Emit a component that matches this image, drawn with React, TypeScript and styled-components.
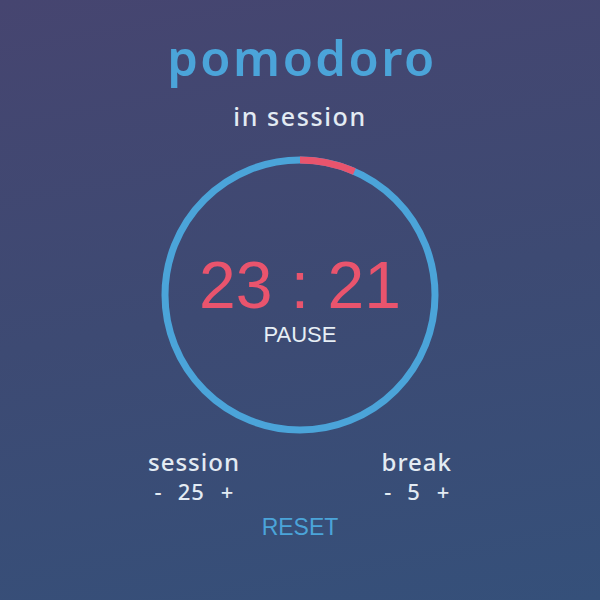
import React, { useState } from "react";
import styled, { createGlobalStyle } from "styled-components";

const GlobalStyle = createGlobalStyle`
    html, body {
        margin: 0;
        padding: 0;
    }

    body {
        width: 600px;
        height: 600px;
        overflow: hidden;
        background: linear-gradient(170deg, #464570 0%, #3d4a73 50%, #35507a 100%);
    }
`;

const RADIUS = 135;
const CIRCUMFERENCE = 2 * Math.PI * RADIUS;

const Counter = ({
    label,
    value,
    onChange,
}: {
    label: string;
    value: number;
    onChange: (v: number) => void;
}) => {
    return (
        <StyledCounter>
            <StyledCounterLabel>{label}</StyledCounterLabel>
            <StyledCounterRow>
                <StyledStepBtn onClick={() => onChange(Math.max(1, value - 1))}>-</StyledStepBtn>
                <StyledCounterValue>{value}</StyledCounterValue>
                <StyledStepBtn onClick={() => onChange(value + 1)}>+</StyledStepBtn>
            </StyledCounterRow>
        </StyledCounter>
    );
};

const App = () => {
    const [session, setSession] = useState<number>(25);
    const [breakLength, setBreakLength] = useState<number>(5);
    const [remaining] = useState<number>(23 * 60 + 21);

    const total = session * 60;
    const elapsed = Math.min(1, Math.max(0, (total - remaining) / total));

    const minutes = Math.floor(remaining / 60);
    const seconds = remaining % 60;

    return (
        <>
            <GlobalStyle />
            <StyledPage>
                <StyledTitle>pomodoro</StyledTitle>
                <StyledStatus>in session</StyledStatus>

                <StyledClock>
                    <StyledRing width="280" height="280" viewBox="0 0 280 280">
                        <circle
                            cx="140"
                            cy="140"
                            r={RADIUS}
                            fill="none"
                            stroke="#4ba4d9"
                            strokeWidth="7"
                        />
                        <circle
                            cx="140"
                            cy="140"
                            r={RADIUS}
                            fill="none"
                            stroke="#e9546d"
                            strokeWidth="7"
                            strokeDasharray={`${CIRCUMFERENCE * elapsed} ${CIRCUMFERENCE}`}
                            transform="rotate(-90 140 140)"
                        />
                    </StyledRing>
                    <StyledClockFace>
                        <StyledTime>
                            {minutes} : {seconds < 10 ? `0${seconds}` : seconds}
                        </StyledTime>
                        <StyledPauseBtn>PAUSE</StyledPauseBtn>
                    </StyledClockFace>
                </StyledClock>

                <StyledSettings>
                    <Counter label="session" value={session} onChange={setSession} />
                    <Counter label="break" value={breakLength} onChange={setBreakLength} />
                </StyledSettings>

                <StyledResetBtn>RESET</StyledResetBtn>
            </StyledPage>
        </>
    );
};

export default App;

const StyledPage = styled.main`
    width: 600px;
    height: 600px;
    box-sizing: border-box;
    padding-top: 24px;

    display: flex;
    flex-direction: column;
    align-items: center;

    font-family: "Noto Sans", "Open Sans", sans-serif;
`;

const StyledTitle = styled.h1`
    margin: 0 0 0 4px;
    font-size: 49px;
    font-weight: 600;
    line-height: 66px;
    letter-spacing: 2.5px;
    color: #4ba4d9;
`;

const StyledStatus = styled.h2`
    margin: 9px 0 0;
    font-size: 25px;
    font-weight: 500;
    line-height: 34px;
    letter-spacing: 1.6px;
    color: #e3ebf3;
`;

const StyledClock = styled.div`
    margin-top: 22px;
    width: 280px;
    height: 280px;
    display: grid;
    place-items: center;
`;

const StyledRing = styled.svg`
    grid-area: 1 / 1;
    display: block;
`;

const StyledClockFace = styled.div`
    grid-area: 1 / 1;
    display: flex;
    flex-direction: column;
    align-items: center;
    padding-top: 8px;
`;

const StyledTime = styled.div`
    font-family: "Liberation Sans", Arial, sans-serif;
    font-size: 66px;
    line-height: 70px;
    color: #e9546d;
`;

const StyledPauseBtn = styled.button`
    all: unset;
    cursor: pointer;
    margin-top: 2px;
    font-family: "Liberation Sans", Arial, sans-serif;
    font-size: 22px;
    line-height: 26px;
    color: #e6eef5;
`;

const StyledSettings = styled.div`
    margin-top: 12px;
    width: 304px;
    display: flex;
    justify-content: space-between;
`;

const StyledCounter = styled.div`
    display: flex;
    flex-direction: column;
    align-items: center;
`;

const StyledCounterLabel = styled.div`
    font-size: 24px;
    font-weight: 500;
    line-height: 30px;
    letter-spacing: 1px;
    color: #e3ebf3;
`;

const StyledCounterRow = styled.div`
    display: flex;
    align-items: center;
    gap: 16px;
    line-height: 28px;
    color: #e3ebf3;
`;

const StyledStepBtn = styled.button`
    all: unset;
    cursor: pointer;
    font-size: 22px;
    font-weight: 500;
`;

const StyledCounterValue = styled.span`
    font-size: 22px;
    font-weight: 500;
    letter-spacing: 1px;
`;

const StyledResetBtn = styled.button`
    all: unset;
    cursor: pointer;
    margin-top: 8px;
    font-family: "Liberation Sans", Arial, sans-serif;
    font-size: 23px;
    line-height: 28px;
    color: #4ba4d9;
`;
